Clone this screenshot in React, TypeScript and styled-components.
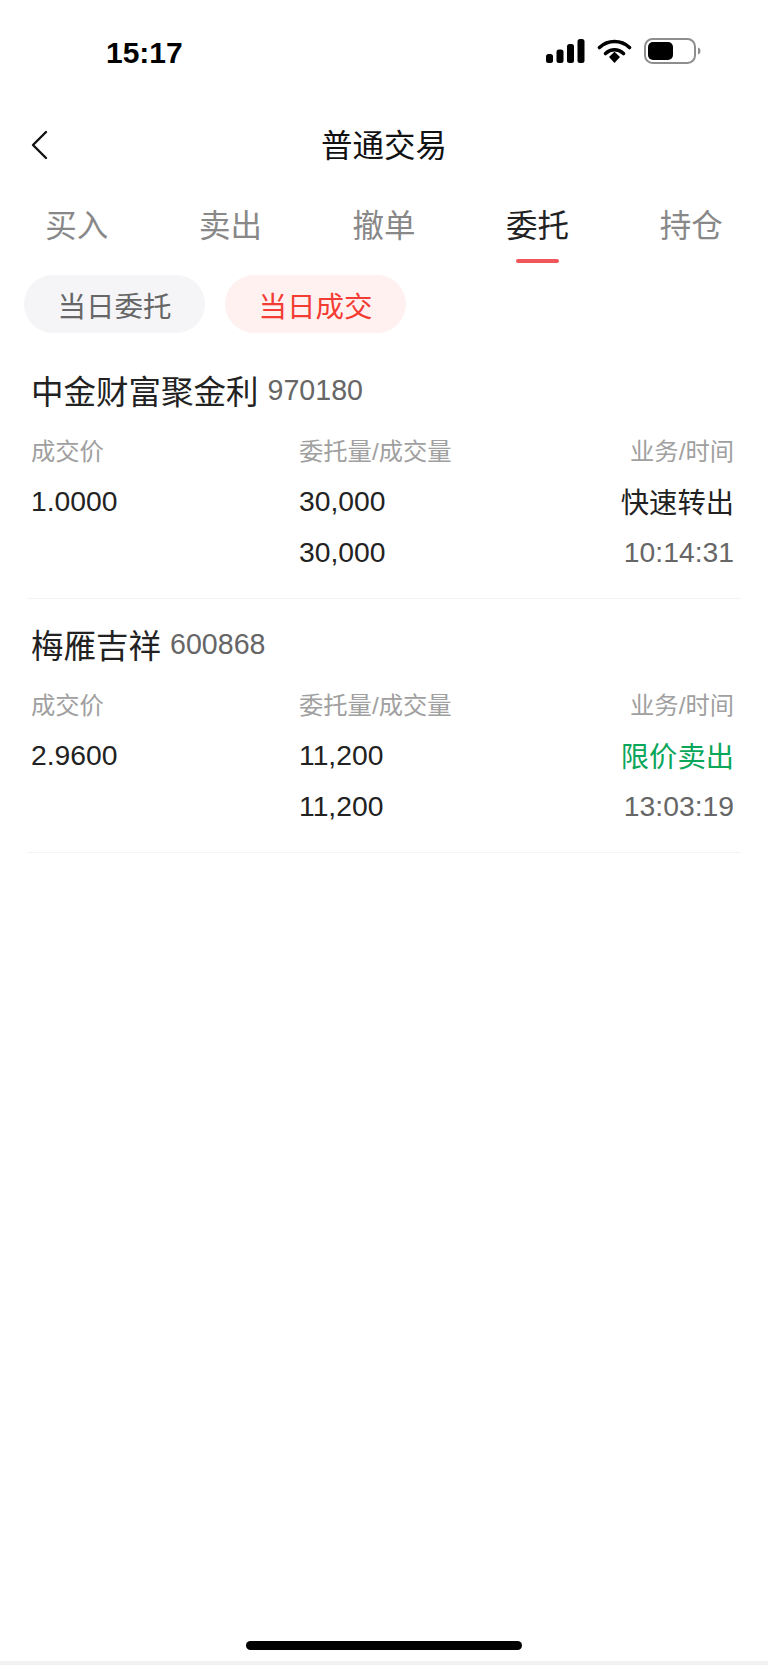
import styled, { createGlobalStyle } from "styled-components";

const GlobalStyle = createGlobalStyle`
    html, body {
        margin: 0;
        padding: 0;
        background: #fff;
    }
    body {
        font-family: "Liberation Sans", "Noto Sans CJK SC", sans-serif;
    }
`;

const Page = styled.div`
    width: 768px;
    height: 1665px;
    display: flex;
    flex-direction: column;
    background: #fff;
    overflow: hidden;
`;

const StatusBar = styled.div`
    height: 102px;
    padding: 4px 67px 0 106px;
    display: flex;
    align-items: center;
    justify-content: space-between;
    box-sizing: border-box;
`;

const Clock = styled.span`
    font-family: "Liberation Sans", sans-serif;
    font-size: 30px;
    font-weight: 700;
    color: #000;
`;

const StatusIcons = styled.div`
    display: flex;
    align-items: center;
    gap: 12px;
    margin-bottom: 4px;
`;

const NavBar = styled.header`
    height: 84px;
    padding: 0 32px;
    display: flex;
    align-items: center;
    box-sizing: border-box;
`;

const BackIcon = styled.svg`
    width: 17px;
    height: 30px;
    margin-left: -1px;
    margin-top: 2px;
`;

const Title = styled.h1`
    flex: 1;
    margin: 0 16px 2px 0;
    font-size: 31.5px;
    font-weight: 400;
    text-align: center;
    color: #111;
`;

const Tabs = styled.nav`
    height: 89px;
    display: grid;
    grid-template-columns: repeat(5, 1fr);
`;

const Tab = styled.div<{ $active?: boolean }>`
    position: relative;
    display: flex;
    justify-content: center;
    padding-top: 18px;
    font-size: 31.5px;
    line-height: 45px;
    color: ${(p) => (p.$active ? "#222" : "#888")};

    ${(p) =>
        p.$active &&
        `
        &::after {
            content: "";
            position: absolute;
            top: 73px;
            left: 50%;
            width: 43px;
            height: 4px;
            margin-left: -22px;
            border-radius: 2px;
            background: #f0565a;
        }
    `}
`;

const Filters = styled.div`
    display: flex;
    gap: 20px;
    padding: 0 0 0 24px;
`;

const Pill = styled.div<{ $active?: boolean }>`
    width: 181px;
    height: 58px;
    border-radius: 29px;
    display: flex;
    align-items: center;
    justify-content: center;
    font-size: 28.5px;
    color: ${(p) => (p.$active ? "#f33c33" : "#666")};
    background: ${(p) => (p.$active ? "#fff1f0" : "#f5f5f7")};
`;

const CardList = styled.div`
    margin-top: 12px;
`;

const Card = styled.section`
    margin: 0 27px;
    height: 254px;
    padding: 15px 7px 0 4px;
    box-sizing: border-box;
    border-bottom: 1px solid #f4f4f4;
`;

const NameRow = styled.div`
    height: 58px;
    margin-bottom: 5px;
    display: flex;
    align-items: center;
    gap: 9px;
`;

const Name = styled.span`
    font-size: 32.5px;
    color: #222;
`;

const Code = styled.span`
    font-size: 28.6px;
    padding-top: 3px;
    color: #666;
`;

const Grid = styled.div`
    display: grid;
    grid-template-columns: 268px 1fr auto;
    grid-template-rows: 52px 51px 51px;
    align-items: center;
`;

const Label = styled.div<{ $right?: boolean }>`
    font-size: 24.3px;
    color: #a0a0a0;
    text-align: ${(p) => (p.$right ? "right" : "left")};
`;

const Value = styled.div<{ $right?: boolean; $color?: string }>`
    font-size: 28.3px;
    padding-top: 2px;
    color: ${(p) => p.$color || "#222"};
    text-align: ${(p) => (p.$right ? "right" : "left")};
`;

const BizValue = styled(Value)`
    padding-top: 0;
`;

const HomeIndicator = styled.div`
    margin-top: auto;
    height: 20px;
    padding-top: 4px;
    background: #fff;
    border-bottom: 4px solid #f2f2f2;
    display: flex;
    justify-content: center;
    box-sizing: content-box;

    &::before {
        content: "";
        width: 276px;
        height: 9px;
        border-radius: 5px;
        background: #000;
    }
`;

const trades = [
    { name: "中金财富聚金利", code: "970180", price: "1.0000", qty: "30,000", biz: "快速转出", bizColor: "#222", time: "10:14:31" },
    { name: "梅雁吉祥", code: "600868", price: "2.9600", qty: "11,200", biz: "限价卖出", bizColor: "#0aa65a", time: "13:03:19" },
];

const tabs = ["买入", "卖出", "撤单", "委托", "持仓"];

const App = () => {
    return (
        <Page>
            <GlobalStyle />
            <StatusBar>
                <Clock>15:17</Clock>
                <StatusIcons>
                    <svg width="39" height="24" viewBox="0 0 39 24">
                        <rect x="0" y="15" width="7" height="9" rx="2.5" fill="#000" />
                        <rect x="10.5" y="10.5" width="7" height="13.5" rx="2.5" fill="#000" />
                        <rect x="21" y="5" width="7" height="19" rx="2.5" fill="#000" />
                        <rect x="31.5" y="0" width="7" height="24" rx="2.5" fill="#000" />
                    </svg>
                    <svg width="35" height="24" viewBox="0 0 34 24" fill="none">
                        <path d="M2 8.5C10.5 .5 23.5 .5 32 8.5" stroke="#000" strokeWidth="3.6" strokeLinecap="round" />
                        <path d="M8 14.5C13.5 9.5 20.5 9.5 26 14.5" stroke="#000" strokeWidth="3.6" strokeLinecap="round" />
                        <path d="M11.5 18L17 12.8L22.5 18L17 24Z" fill="#000" />
                    </svg>
                    <svg width="57" height="26" viewBox="0 0 57 26" fill="none">
                        <rect x="1" y="1" width="50" height="24" rx="7.5" stroke="#8e8e8e" strokeWidth="2" />
                        <rect x="4" y="4" width="25" height="18" rx="5" fill="#000" />
                        <path d="M54 9.5C55.6 10 56.5 11.4 56.5 13C56.5 14.6 55.6 16 54 16.5Z" fill="#8e8e8e" />
                    </svg>
                </StatusIcons>
            </StatusBar>
            <NavBar>
                <BackIcon viewBox="0 0 17 30" fill="none">
                    <path d="M15 2L2 15L15 28" stroke="#111" strokeWidth="2.4" strokeLinecap="round" strokeLinejoin="round" />
                </BackIcon>
                <Title>普通交易</Title>
            </NavBar>
            <Tabs>
                {tabs.map((t) => (
                    <Tab key={t} $active={t === "委托"}>{t}</Tab>
                ))}
            </Tabs>
            <Filters>
                <Pill>当日委托</Pill>
                <Pill $active>当日成交</Pill>
            </Filters>
            <CardList>
                {trades.map((item) => (
                    <Card key={item.code}>
                        <NameRow>
                            <Name>{item.name}</Name>
                            <Code>{item.code}</Code>
                        </NameRow>
                        <Grid>
                            <Label>成交价</Label>
                            <Label>委托量/成交量</Label>
                            <Label $right>业务/时间</Label>
                            <Value>{item.price}</Value>
                            <Value>{item.qty}</Value>
                            <BizValue $right $color={item.bizColor}>{item.biz}</BizValue>
                            <span />
                            <Value>{item.qty}</Value>
                            <Value $right $color="#666">{item.time}</Value>
                        </Grid>
                    </Card>
                ))}
            </CardList>
            <HomeIndicator />
        </Page>
    );
};

export default App;
